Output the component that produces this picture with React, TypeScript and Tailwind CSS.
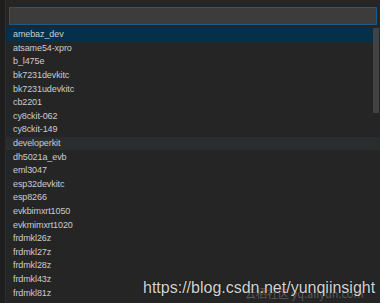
const boards = [
  "amebaz_dev",
  "atsame54-xpro",
  "b_l475e",
  "bk7231devkitc",
  "bk7231udevkitc",
  "cb2201",
  "cy8ckit-062",
  "cy8ckit-149",
  "developerkit",
  "dh5021a_evb",
  "eml3047",
  "esp32devkitc",
  "esp8266",
  "evkbimxrt1050",
  "evkmimxrt1020",
  "frdmkl26z",
  "frdmkl27z",
  "frdmkl28z",
  "frdmkl43z",
  "frdmkl81z",
];

function BoardRow({ name, index }: { name: string; index: number }) {
  const selected = index === 0;
  const hovered = index === 8;
  const bg = selected ? "bg-[#062f4a]" : hovered ? "bg-[#2a2d2e]" : "";
  return (
    <div className={`h-[13.6px] flex items-center pl-[7px] text-[9px] tracking-[-0.1px] leading-none text-[#cccccc] ${bg}`}>
      {name}
    </div>
  );
}

export default function App() {
  return (
    <div className="w-[385px] h-[308px] bg-white">
      <div className="relative w-[380px] h-[303px] bg-[#1e1e1e] pl-[5px] font-['Liberation_Sans',Arial,sans-serif]">
        <div className="relative h-full bg-[#252526] border-l border-[#2d2d2d] pt-[7px] overflow-hidden">
          <div className="ml-[3px] mr-[3px] h-[18px] bg-[#3c3c3c] border border-[#1b5a88]" />
          <div className="mt-[3px] flex flex-col">
            {boards.map((b, i) => (
              <BoardRow key={b} name={b} index={i} />
            ))}
          </div>
          <div className="absolute top-[28px] right-[1px] w-[6px] h-[85px] bg-[#4a4a4a]/80" />
        </div>
        <div className="absolute left-[245px] top-[288px] text-[11px] text-[#5a5a5a] font-['Noto_Sans_CJK_SC',sans-serif] leading-none">
          云栖社区 yq.aliyun.com
        </div>
        <div className="absolute left-[143px] top-[280px] text-[16px] leading-none text-[#d4d4d4] font-['Liberation_Sans',Arial,sans-serif] [text-shadow:0_0_1px_#000]">
          https://blog.csdn.net/yunqiinsight
        </div>
      </div>
    </div>
  );
}
